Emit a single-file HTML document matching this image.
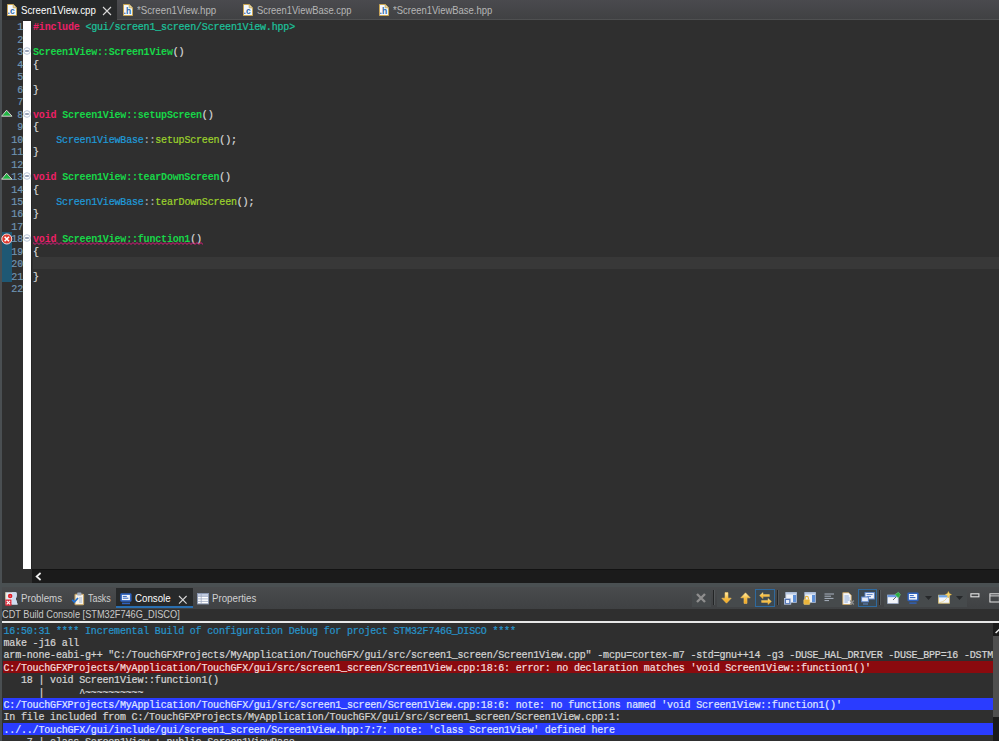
<!DOCTYPE html>
<html>
<head>
<meta charset="utf-8">
<title>Screen1View.cpp</title>
<style>
*{box-sizing:border-box;margin:0;padding:0}
html,body{width:999px;height:741px;overflow:hidden;background:#2f2f2f}
body{position:relative;font-family:"Liberation Sans",sans-serif;font-size:11.5px;color:#ddd}
.abs{position:absolute}
#lstrip{left:0;top:0;width:2px;height:741px;background:#4a4f52}
#tabbar{left:2px;top:0;width:997px;height:20px;background:linear-gradient(#4a4a4e,#404143);border-bottom:1.5px solid #4f5051}
#acttab{left:2px;top:0;width:114.5px;height:19.6px;background:#27292a}
.tab{position:absolute;top:1px;height:19px;line-height:19px;white-space:nowrap;font-size:11.5px;color:#b6b6b6}
.tab.on{color:#fff}
.fic{position:absolute;top:3px;width:11px;height:13px}
#gutter{left:2px;top:20px;width:21px;height:549px;background:#2f2f2f}
#wbar{left:22.9px;top:19.6px;width:9px;height:549.3px;background:#fff;border-right:.9px solid #242424;border-top:1px solid #242424}
#curline{left:33.4px;width:966px;height:12.6px;background:#383838}
#rng{left:2px;width:10px;background:#1e5874}
.mono{font-family:"Liberation Mono",monospace;font-size:10px;letter-spacing:-0.18px;white-space:pre;-webkit-text-stroke:0.22px}
.ln{position:absolute;left:2px;width:21px;text-align:right;color:#6f94b2;height:12.47px;line-height:12.47px}
.cl{position:absolute;left:33px;height:12.47px;line-height:12.47px;color:#d9d9d9}
.k{color:#ec1f66;font-weight:bold;-webkit-text-stroke:0}.g{color:#17d648;font-weight:bold;-webkit-text-stroke:0}.t{color:#1cc29c}.b{color:#1f9ad8}.y{color:#9cd22c}.d{color:#a9aeb4}.w{color:#e6e6e6}
.sx{display:inline-block;transform-origin:0 50%;transform:scaleX(.845)}
#hscroll{left:32px;top:569px;width:967px;height:13.6px;background:#1b1b1b;border-top:1px solid #121212}
#sep{left:0;top:582.6px;width:999px;height:4.6px;background:#4a5052}
#btabs{left:2px;top:587px;width:997px;height:21.6px;background:linear-gradient(#494b4d,#3f4143)}
.tg{position:absolute;top:588.6px;height:18.2px;background:#464a4c}
.tsel{position:absolute;top:588.6px;height:18px;width:19.4px;background:#3b4851;border:1px solid #2f6a9e}
.tsep{position:absolute;top:590px;height:15px;width:2px;border-left:1px solid #232526;border-right:1px solid #55595b}
#bact{left:115.6px;top:588px;width:77.2px;height:20.4px;background:#27292a;border-bottom:2.4px solid #2a6fb0}
.bt{position:absolute;top:589px;height:19px;line-height:19px;font-size:11.5px;color:#d0d0d0;white-space:nowrap}
#ctitle{left:2px;top:608.5px;width:997px;height:12.5px;background:#2f2f2f;line-height:11px;font-size:11.3px;color:#c9c9c9;padding-left:0px;white-space:nowrap}
#ctitle span{display:inline-block;transform-origin:0 50%;transform:scaleX(.814)}
#wline{left:2px;top:620.7px;width:997px;height:2px;background:#e8e8e8}
#cons{left:3px;top:623px;width:989.5px;height:118px;overflow:hidden;background:#2f2f2f}
.co{position:absolute;left:0;width:989.5px;height:12px;line-height:15.1px;color:#d4d4d4;padding-left:0.5px}
.co.err{background:#8b0a0e;color:#f6dcdc}
.co.note{background:#2a3cff;color:#dfe5ff}
.co.info{color:#2793c9}
#vscroll{left:992.5px;top:623px;width:6.5px;height:118px;background:#1a1a1a}
#vthumb{left:993.4px;top:636.3px;width:5.6px;height:80.7px;background:#4f4f4f}
</style>
</head>
<body>
<div id="lstrip" class="abs"></div>
<div id="tabbar" class="abs"></div>
<div id="acttab" class="abs"></div>
<div class="tab on" style="left:21px"><span class="sx">Screen1View.cpp</span></div>
<div class="tab" style="left:137px"><span class="sx">*Screen1View.hpp</span></div>
<div class="tab" style="left:257px"><span class="sx" style="transform:scaleX(.817)">Screen1ViewBase.cpp</span></div>
<div class="tab" style="left:393px"><span class="sx" style="transform:scaleX(.823)">*Screen1ViewBase.hpp</span></div>
<svg class="abs" style="left:6px;top:3px" width="12" height="14" viewBox="0 0 12 14"><path d="M1.5 1.5h5.7l3.3 3.3v7.7h-9z" fill="#f4f8fd" stroke="#c9a652" stroke-width="1"/><path d="M7.2 1.5v3.3h3.3" fill="#e8d9a8" stroke="#c9a652" stroke-width=".8"/><text x="1.6" y="11.3" font-family="Liberation Sans,sans-serif" font-weight="bold" font-size="8.5" fill="#2f6aa8">.c</text></svg>
<svg class="abs" style="left:122px;top:3px" width="12" height="14" viewBox="0 0 12 14"><path d="M1.5 1.5h5.7l3.3 3.3v7.7h-9z" fill="#f4f8fd" stroke="#c9a652" stroke-width="1"/><path d="M7.2 1.5v3.3h3.3" fill="#e8d9a8" stroke="#c9a652" stroke-width=".8"/><text x="1.6" y="11.3" font-family="Liberation Sans,sans-serif" font-weight="bold" font-size="8.5" fill="#2f6aa8">.h</text></svg>
<svg class="abs" style="left:242px;top:3px" width="12" height="14" viewBox="0 0 12 14"><path d="M1.5 1.5h5.7l3.3 3.3v7.7h-9z" fill="#f4f8fd" stroke="#c9a652" stroke-width="1"/><path d="M7.2 1.5v3.3h3.3" fill="#e8d9a8" stroke="#c9a652" stroke-width=".8"/><text x="1.6" y="11.3" font-family="Liberation Sans,sans-serif" font-weight="bold" font-size="8.5" fill="#2f6aa8">.c</text></svg>
<svg class="abs" style="left:378px;top:3px" width="12" height="14" viewBox="0 0 12 14"><path d="M1.5 1.5h5.7l3.3 3.3v7.7h-9z" fill="#f4f8fd" stroke="#c9a652" stroke-width="1"/><path d="M7.2 1.5v3.3h3.3" fill="#e8d9a8" stroke="#c9a652" stroke-width=".8"/><text x="1.6" y="11.3" font-family="Liberation Sans,sans-serif" font-weight="bold" font-size="8.5" fill="#2f6aa8">.h</text></svg>
<svg class="abs" style="left:102px;top:6px" width="10" height="10" viewBox="0 0 10 10"><path d="M1 1l8 8M9 1l-8 8" stroke="#d8d8d8" stroke-width="1.1" fill="none"/></svg>
<div id="gutter" class="abs"></div>
<div id="wbar" class="abs"></div>
<div id="edit">
<div id="rng" class="abs" style="top:231.8px;height:49.8px"></div>
<div id="curline" class="abs" style="top:256.9px"></div>
<div class="ln mono" style="top:22.40px">1</div>
<div class="cl mono" style="top:22.40px"><span class="k">#include</span> <span class="t">&lt;gui/screen1_screen/Screen1View.hpp&gt;</span></div>
<div class="ln mono" style="top:34.87px">2</div>
<div class="ln mono" style="top:47.34px">3</div>
<div class="cl mono" style="top:47.34px"><span class="g">Screen1View::Screen1View</span>()</div>
<div class="ln mono" style="top:59.81px">4</div>
<div class="cl mono" style="top:59.81px">{</div>
<div class="ln mono" style="top:72.28px">5</div>
<div class="ln mono" style="top:84.75px">6</div>
<div class="cl mono" style="top:84.75px">}</div>
<div class="ln mono" style="top:97.22px">7</div>
<div class="ln mono" style="top:109.69px">8</div>
<div class="cl mono" style="top:109.69px"><span class="k">void</span> <span class="g">Screen1View::setupScreen</span>()</div>
<div class="ln mono" style="top:122.16px">9</div>
<div class="cl mono" style="top:122.16px">{</div>
<div class="ln mono" style="top:134.63px">10</div>
<div class="cl mono" style="top:134.63px">    <span class="b">Screen1ViewBase</span><span class="d">::</span><span class="y">setupScreen</span>();</div>
<div class="ln mono" style="top:147.10px">11</div>
<div class="cl mono" style="top:147.10px">}</div>
<div class="ln mono" style="top:159.57px">12</div>
<div class="ln mono" style="top:172.04px">13</div>
<div class="cl mono" style="top:172.04px"><span class="k">void</span> <span class="g">Screen1View::tearDownScreen</span>()</div>
<div class="ln mono" style="top:184.51px">14</div>
<div class="cl mono" style="top:184.51px">{</div>
<div class="ln mono" style="top:196.98px">15</div>
<div class="cl mono" style="top:196.98px">    <span class="b">Screen1ViewBase</span><span class="d">::</span><span class="y">tearDownScreen</span>();</div>
<div class="ln mono" style="top:209.45px">16</div>
<div class="cl mono" style="top:209.45px">}</div>
<div class="ln mono" style="top:221.92px">17</div>
<div class="ln mono" style="top:234.39px">18</div>
<div class="cl mono" style="top:234.39px"><span class="sq"><span class="k">void</span> <span class="g">Screen1View::function1</span>()</span></div>
<div class="ln mono" style="top:246.86px">19</div>
<div class="cl mono" style="top:246.86px">{</div>
<div class="ln mono" style="top:259.33px">20</div>
<div class="ln mono" style="top:271.80px">21</div>
<div class="cl mono" style="top:271.80px">}</div>
<div class="ln mono" style="top:284.27px">22</div>
<svg class="abs" style="left:22.8px;top:47.44px" width="8" height="8" viewBox="0 0 8 8"><circle cx="4" cy="4" r="3.3" fill="#fff" stroke="#bcc8da" stroke-width="1"/><path d="M2.2 4h3.6" stroke="#4f6388" stroke-width="1.15"/></svg>
<svg class="abs" style="left:22.8px;top:109.79px" width="8" height="8" viewBox="0 0 8 8"><circle cx="4" cy="4" r="3.3" fill="#fff" stroke="#bcc8da" stroke-width="1"/><path d="M2.2 4h3.6" stroke="#4f6388" stroke-width="1.15"/></svg>
<svg class="abs" style="left:22.8px;top:172.14px" width="8" height="8" viewBox="0 0 8 8"><circle cx="4" cy="4" r="3.3" fill="#fff" stroke="#bcc8da" stroke-width="1"/><path d="M2.2 4h3.6" stroke="#4f6388" stroke-width="1.15"/></svg>
<svg class="abs" style="left:22.8px;top:234.49px" width="8" height="8" viewBox="0 0 8 8"><circle cx="4" cy="4" r="3.3" fill="#fff" stroke="#bcc8da" stroke-width="1"/><path d="M2.2 4h3.6" stroke="#4f6388" stroke-width="1.15"/></svg>
<svg class="abs" style="left:1px;top:109.49px" width="12" height="9" viewBox="0 0 12 9"><path d="M5.6 1.2L11 7.2H0.6z" fill="#22b444" stroke="#e9d6e0" stroke-width=".9" stroke-linejoin="round"/></svg>
<svg class="abs" style="left:1px;top:171.84px" width="12" height="9" viewBox="0 0 12 9"><path d="M5.6 1.2L11 7.2H0.6z" fill="#22b444" stroke="#e9d6e0" stroke-width=".9" stroke-linejoin="round"/></svg>
<svg class="abs" style="left:1px;top:232.59px" width="12" height="12" viewBox="0 0 12 12"><circle cx="5.8" cy="6" r="5" fill="#e0392d" stroke="#f4e4e4" stroke-width="1"/><path d="M3.6 3.8l4.4 4.4M8 3.8l-4.4 4.4" stroke="#fff" stroke-width="1.6"/></svg>
<svg class="abs" style="left:33px;top:242.19px" width="172" height="3" viewBox="0 0 172 3"><path d="M0.0 0.6 L2.0 2.4 L4.0 0.6 L6.0 2.4 L8.0 0.6 L10.0 2.4 L12.0 0.6 L14.0 2.4 L16.0 0.6 L18.0 2.4 L20.0 0.6 L22.0 2.4 L24.0 0.6 L26.0 2.4 L28.0 0.6 L30.0 2.4 L32.0 0.6 L34.0 2.4 L36.0 0.6 L38.0 2.4 L40.0 0.6 L42.0 2.4 L44.0 0.6 L46.0 2.4 L48.0 0.6 L50.0 2.4 L52.0 0.6 L54.0 2.4 L56.0 0.6 L58.0 2.4 L60.0 0.6 L62.0 2.4 L64.0 0.6 L66.0 2.4 L68.0 0.6 L70.0 2.4 L72.0 0.6 L74.0 2.4 L76.0 0.6 L78.0 2.4 L80.0 0.6 L82.0 2.4 L84.0 0.6 L86.0 2.4 L88.0 0.6 L90.0 2.4 L92.0 0.6 L94.0 2.4 L96.0 0.6 L98.0 2.4 L100.0 0.6 L102.0 2.4 L104.0 0.6 L106.0 2.4 L108.0 0.6 L110.0 2.4 L112.0 0.6 L114.0 2.4 L116.0 0.6 L118.0 2.4 L120.0 0.6 L122.0 2.4 L124.0 0.6 L126.0 2.4 L128.0 0.6 L130.0 2.4 L132.0 0.6 L134.0 2.4 L136.0 0.6 L138.0 2.4 L140.0 0.6 L142.0 2.4 L144.0 0.6 L146.0 2.4 L148.0 0.6 L150.0 2.4 L152.0 0.6 L154.0 2.4 L156.0 0.6 L158.0 2.4 L160.0 0.6 L162.0 2.4 L164.0 0.6 L166.0 2.4 L168.0 0.6 L170.0 2.4" fill="none" stroke="#d81b7a" stroke-width="1"/></svg>
</div><!--/edit-->
<div id="hscroll" class="abs"></div>
<svg class="abs" style="left:35px;top:571.5px" width="7" height="9" viewBox="0 0 7 9"><path d="M5.600 1L1.600 4.500l4 3.500" fill="none" stroke="#f0f0f0" stroke-width="1.700"/></svg>
<div id="sep" class="abs"></div>
<div id="btabs" class="abs"></div>
<div id="bact" class="abs"></div>
<div class="bt" style="left:21px"><span class="sx">Problems</span></div>
<div class="bt" style="left:87.6px"><span class="sx" style="transform:scaleX(.775)">Tasks</span></div>
<div class="bt" style="left:135px;color:#fff"><span class="sx">Console</span></div>
<div class="bt" style="left:212px"><span class="sx">Properties</span></div>
<!-- bottom tab icons -->
<svg class="abs" style="left:4.5px;top:591.5px" width="13" height="15" viewBox="0 0 13 15"><path d="M.4 .3h10.800c.8 1.500.8 4.500-.400 6.500l1.800 5.600H.4z" fill="#e9eff8"/><path d="M7 .3h4.200c.8 1.500.8 4.500-.400 6.500l1.800 5.600H7z" fill="#cfdcf0"/><path d="M.7 .3v7.200" stroke="#d9c98c" stroke-width=".7"/><circle cx="5.150" cy="4" r="2.250" fill="#e21b24"/><circle cx="5.150" cy="4" r=".6" fill="#ffd9d9"/><rect x=".35" y="7.500" width="6.150" height="6.300" fill="#dc2a3a"/><path d="M1.700 8.900l3.400 3.400M5.100 8.900l-3.400 3.400" stroke="#fff" stroke-width="1.200"/></svg>
<svg class="abs" style="left:71px;top:592px" width="14" height="14" viewBox="0 0 14 14"><rect x="4" y="2.2" width="8.6" height="10.6" rx=".8" fill="#f6f2e8" stroke="#c8a564" stroke-width="1.1"/><rect x="6.2" y=".5" width="4.2" height="3" rx=".6" fill="#a3adbf"/><path d="M8 6h3M8 8h3M8 10h3" stroke="#8fa6cf" stroke-width=".8"/><path d="M1.200 7.800l2.200 2.200 3.600-4" fill="none" stroke="#1f6fd2" stroke-width="1.700"/></svg>
<svg class="abs" style="left:120px;top:593px" width="12" height="12" viewBox="0 0 12 12"><rect x=".3" y=".3" width="11.2" height="8.4" rx="1.2" fill="#2f62bd"/><rect x="1.9" y="1.9" width="8" height="5.2" fill="#f4f7fc"/><path d="M2.8 3.4h4M2.8 5.2h5.6" stroke="#2f62bd" stroke-width="1"/><rect x="2" y="9.6" width="8" height="1.6" fill="#2f62bd"/></svg>
<svg class="abs" style="left:178px;top:594.8px" width="10" height="10" viewBox="0 0 10 10"><path d="M1 1l7.6 7.6M8.6 1L1 8.600" stroke="#d8d8d8" stroke-width="1.1" fill="none"/></svg>
<svg class="abs" style="left:197px;top:593px" width="12" height="12" viewBox="0 0 12 12"><rect x=".5" y=".5" width="11" height="10.4" fill="#fff" stroke="#8b98b2" stroke-width="1"/><rect x="1" y="1" width="10" height="2.2" fill="#c3cde0"/><path d="M1 3.4h10M1 5.9h10M1 8.4h10M4.2 1v9.9" stroke="#9aa7c0" stroke-width=".8"/></svg>
<!-- toolbar -->
<svg width="0" height="0" style="position:absolute"><defs><linearGradient id="ag" x1="0" y1="0" x2="0" y2="1"><stop offset="0" stop-color="#fff0b8"/><stop offset=".45" stop-color="#f9c54a"/><stop offset="1" stop-color="#f0a21e"/></linearGradient></defs></svg>
<div class="tg" style="left:691.5px;width:19px"></div>
<svg class="abs" style="left:695px;top:592px" width="12" height="12" viewBox="0 0 12 12"><path d="M2 2l8 8M10 2l-8 8" stroke="#8e8e8e" stroke-width="2.4"/></svg>
<div class="tsep" style="left:712.5px"></div>
<div class="tg" style="left:717px;width:57.5px"></div>
<svg class="abs" style="left:720.5px;top:592px" width="11" height="12" viewBox="0 0 11 12"><path d="M4 .6h3v5.600h3.200L5.500 11.200.800 6.200H4z" fill="url(#ag)" stroke="#f3c45c" stroke-width=".6"/></svg>
<svg class="abs" style="left:740px;top:592px" width="11" height="12" viewBox="0 0 11 12"><path d="M4 11.400h3V5.800h3.200L5.500 .8.800 5.800H4z" fill="url(#ag)" stroke="#f3c45c" stroke-width=".6"/></svg>
<div class="tsel" style="left:755.2px"></div>
<svg class="abs" style="left:758.5px;top:591.5px" width="13" height="13" viewBox="0 0 13 13"><path d="M.6 3.600L4 .6v2h6.400v2H4v2z" fill="url(#ag)" stroke="#f3c45c" stroke-width=".5"/><path d="M12.400 9.400L9 6.400v2H2.600v2H9v2z" fill="url(#ag)" stroke="#f3c45c" stroke-width=".5"/></svg>
<div class="tsep" style="left:776.8px"></div>
<div class="tg" style="left:780.6px;width:96.4px"></div>
<svg class="abs" style="left:784px;top:592px" width="13" height="13" viewBox="0 0 13 13"><rect x="1.800" y=".5" width="10.700" height="10" fill="#eef2f8" stroke="#9fb0cc" stroke-width=".8"/><rect x="1.800" y=".5" width="10.700" height="2" fill="#b9c9e4"/><rect x="9" y="3" width="3" height="7" fill="#5d8fd6"/><rect x=".4" y="6.400" width="6.400" height="5.800" fill="#5477b8" stroke="#c9d4ea" stroke-width=".7"/><path d="M2 8h3.200v3H2z" fill="#e8eefa"/></svg>
<svg class="abs" style="left:803px;top:592px" width="13" height="13" viewBox="0 0 13 13"><rect x="1.800" y=".5" width="10.700" height="10" fill="#eef2f8" stroke="#9fb0cc" stroke-width=".8"/><rect x="1.800" y=".5" width="10.700" height="2" fill="#b9c9e4"/><rect x="9" y="3" width="3" height="7" fill="#5d8fd6"/><rect x=".8" y="7.400" width="6" height="5" rx=".6" fill="#e9b33a" stroke="#f8dc86" stroke-width=".5"/><path d="M2.200 7.400V6a1.600 1.600 0 013.200 0v1.400" fill="none" stroke="#e9b33a" stroke-width="1.100"/></svg>
<svg class="abs" style="left:824px;top:592.5px" width="11" height="9" viewBox="0 0 11 9"><path d="M.5 1h9.500M.5 3.200h6.500M.5 5.400h9M.5 7.600h4.500" stroke="#a9b2c0" stroke-width="1"/></svg>
<svg class="abs" style="left:842px;top:591.5px" width="13" height="14" viewBox="0 0 13 14"><path d="M.8 .7h5.800l2.600 2.600v9.200H.8z" fill="#f5f7fb" stroke="#c8a564" stroke-width=".9"/><path d="M2.400 4h4.400M2.400 6h5.200M2.400 8h5.200M2.400 10h3.400" stroke="#7f9fd2" stroke-width=".9"/><path d="M8.200 8.600l3.600 3.800M11.800 8.600l-3.600 3.800" stroke="#8c8c8c" stroke-width="1.400"/></svg>
<div class="tsel" style="left:857.8px"></div>
<svg class="abs" style="left:861px;top:591.5px" width="14" height="13" viewBox="0 0 14 13"><rect x="4" y=".6" width="9.400" height="6.400" fill="#f3f6fb" stroke="#5d86cc" stroke-width="1"/><path d="M5.600 2.600h6M5.600 4.600h4.400" stroke="#4a73bd" stroke-width=".9"/><rect x=".6" y="5" width="6.800" height="4.800" fill="#e6ecf7" stroke="#5d86cc" stroke-width="1"/><path d="M2 12h5" stroke="#5d86cc" stroke-width="1"/></svg>
<div class="tsep" style="left:878.6px"></div>
<div class="tg" style="left:883.5px;width:83px"></div>
<svg class="abs" style="left:887px;top:591px" width="14" height="14" viewBox="0 0 14 14"><rect x=".6" y="4" width="10.600" height="8.400" fill="#f3f6fb" stroke="#9fb0cc" stroke-width=".8"/><rect x=".6" y="4" width="10.600" height="2.200" fill="#6d9ae0"/><path d="M6 9l3-3" stroke="#666" stroke-width="1"/><path d="M8 3.600l3.400 3.400 2-3.400-2-2.400z" fill="#2fae45" stroke="#79d688" stroke-width=".5"/></svg>
<svg class="abs" style="left:907px;top:591.500px" width="12" height="13" viewBox="0 0 12 13"><rect x=".4" y=".4" width="11.200" height="8.800" rx="1.200" fill="#2f62bd"/><rect x="1.900" y="2" width="8.200" height="5.600" fill="#f4f7fc"/><path d="M2.800 3.600h4M2.800 5.600h5.600" stroke="#2f62bd" stroke-width="1"/><rect x="2.400" y="10.400" width="7.200" height="1.400" fill="#2f62bd"/></svg>
<svg class="abs" style="left:924.5px;top:595.500px" width="7" height="4" viewBox="0 0 7 4"><path d="M0 0h7L3.500 4z" fill="#26282a"/></svg>
<svg class="abs" style="left:938px;top:590.500px" width="14" height="15" viewBox="0 0 14 15"><rect x=".6" y="4.200" width="10.800" height="8" fill="#f2f6fc" stroke="#d9c27a" stroke-width=".9"/><rect x=".6" y="4.200" width="10.800" height="2.200" fill="#6aa3e8"/><path d="M1.500 11.600c4-.5 7-3 8.500-7" fill="none" stroke="#e6cf86" stroke-width=".8"/><path d="M10.400 .4l1 2.200 2.200 1-2.200 1-1 2.200-1-2.200-2.200-1 2.200-1z" fill="#f7d56a" stroke="#e5b13a" stroke-width=".4"/></svg>
<svg class="abs" style="left:956px;top:595.500px" width="7" height="4" viewBox="0 0 7 4"><path d="M0 0h7L3.500 4z" fill="#26282a"/></svg>
<svg class="abs" style="left:970px;top:593px" width="10" height="5" viewBox="0 0 10 5"><rect x=".9" y=".8" width="8" height="3" fill="none" stroke="#e4e4e4" stroke-width="1.100"/></svg>
<svg class="abs" style="left:989px;top:592.500px" width="10" height="11" viewBox="0 0 10 11"><rect x=".9" y=".8" width="9.500" height="8.200" fill="none" stroke="#e4e4e4" stroke-width="1"/><path d="M.9 2.900h9.500" stroke="#e4e4e4" stroke-width=".9"/></svg>
<!--/bicons-->
<div id="ctitle" class="abs"><span>CDT Build Console [STM32F746G_DISCO]</span></div>
<div id="wline" class="abs"></div>
<div id="cons" class="abs mono">
<div class="co info" style="top:0.50px">16:50:31 **** Incremental Build of configuration Debug for project STM32F746G_DISCO ****</div>
<div class="co" style="top:12.90px">make -j16 all </div>
<div class="co" style="top:25.30px">arm-none-eabi-g++ "C:/TouchGFXProjects/MyApplication/TouchGFX/gui/src/screen1_screen/Screen1View.cpp" -mcpu=cortex-m7 -std=gnu++14 -g3 -DUSE_HAL_DRIVER -DUSE_BPP=16 -DSTM32F746xx</div>
<div class="co err" style="top:37.70px">C:/TouchGFXProjects/MyApplication/TouchGFX/gui/src/screen1_screen/Screen1View.cpp:18:6: error: no declaration matches 'void Screen1View::function1()'</div>
<div class="co" style="top:50.10px">   18 | void Screen1View::function1()</div>
<div class="co" style="top:62.50px">      |      ^~~~~~~~~~~</div>
<div class="co note" style="top:74.90px">C:/TouchGFXProjects/MyApplication/TouchGFX/gui/src/screen1_screen/Screen1View.cpp:18:6: note: no functions named 'void Screen1View::function1()'</div>
<div class="co" style="top:87.30px">In file included from C:/TouchGFXProjects/MyApplication/TouchGFX/gui/src/screen1_screen/Screen1View.cpp:1:</div>
<div class="co note" style="top:99.70px">../../TouchGFX/gui/include/gui/screen1_screen/Screen1View.hpp:7:7: note: 'class Screen1View' defined here</div>
<div class="co" style="top:112.10px">    7 | class Screen1View : public Screen1ViewBase</div>
</div>
<div id="vscroll" class="abs"></div>
<div id="vthumb" class="abs"></div>
<svg class="abs" style="left:994.5px;top:627.5px" width="5" height="6" viewBox="0 0 5 6"><path d="M.6 5L4.600 1.200 8 5" fill="none" stroke="#e8e8e8" stroke-width="1.500"/></svg>
</body>
</html>
